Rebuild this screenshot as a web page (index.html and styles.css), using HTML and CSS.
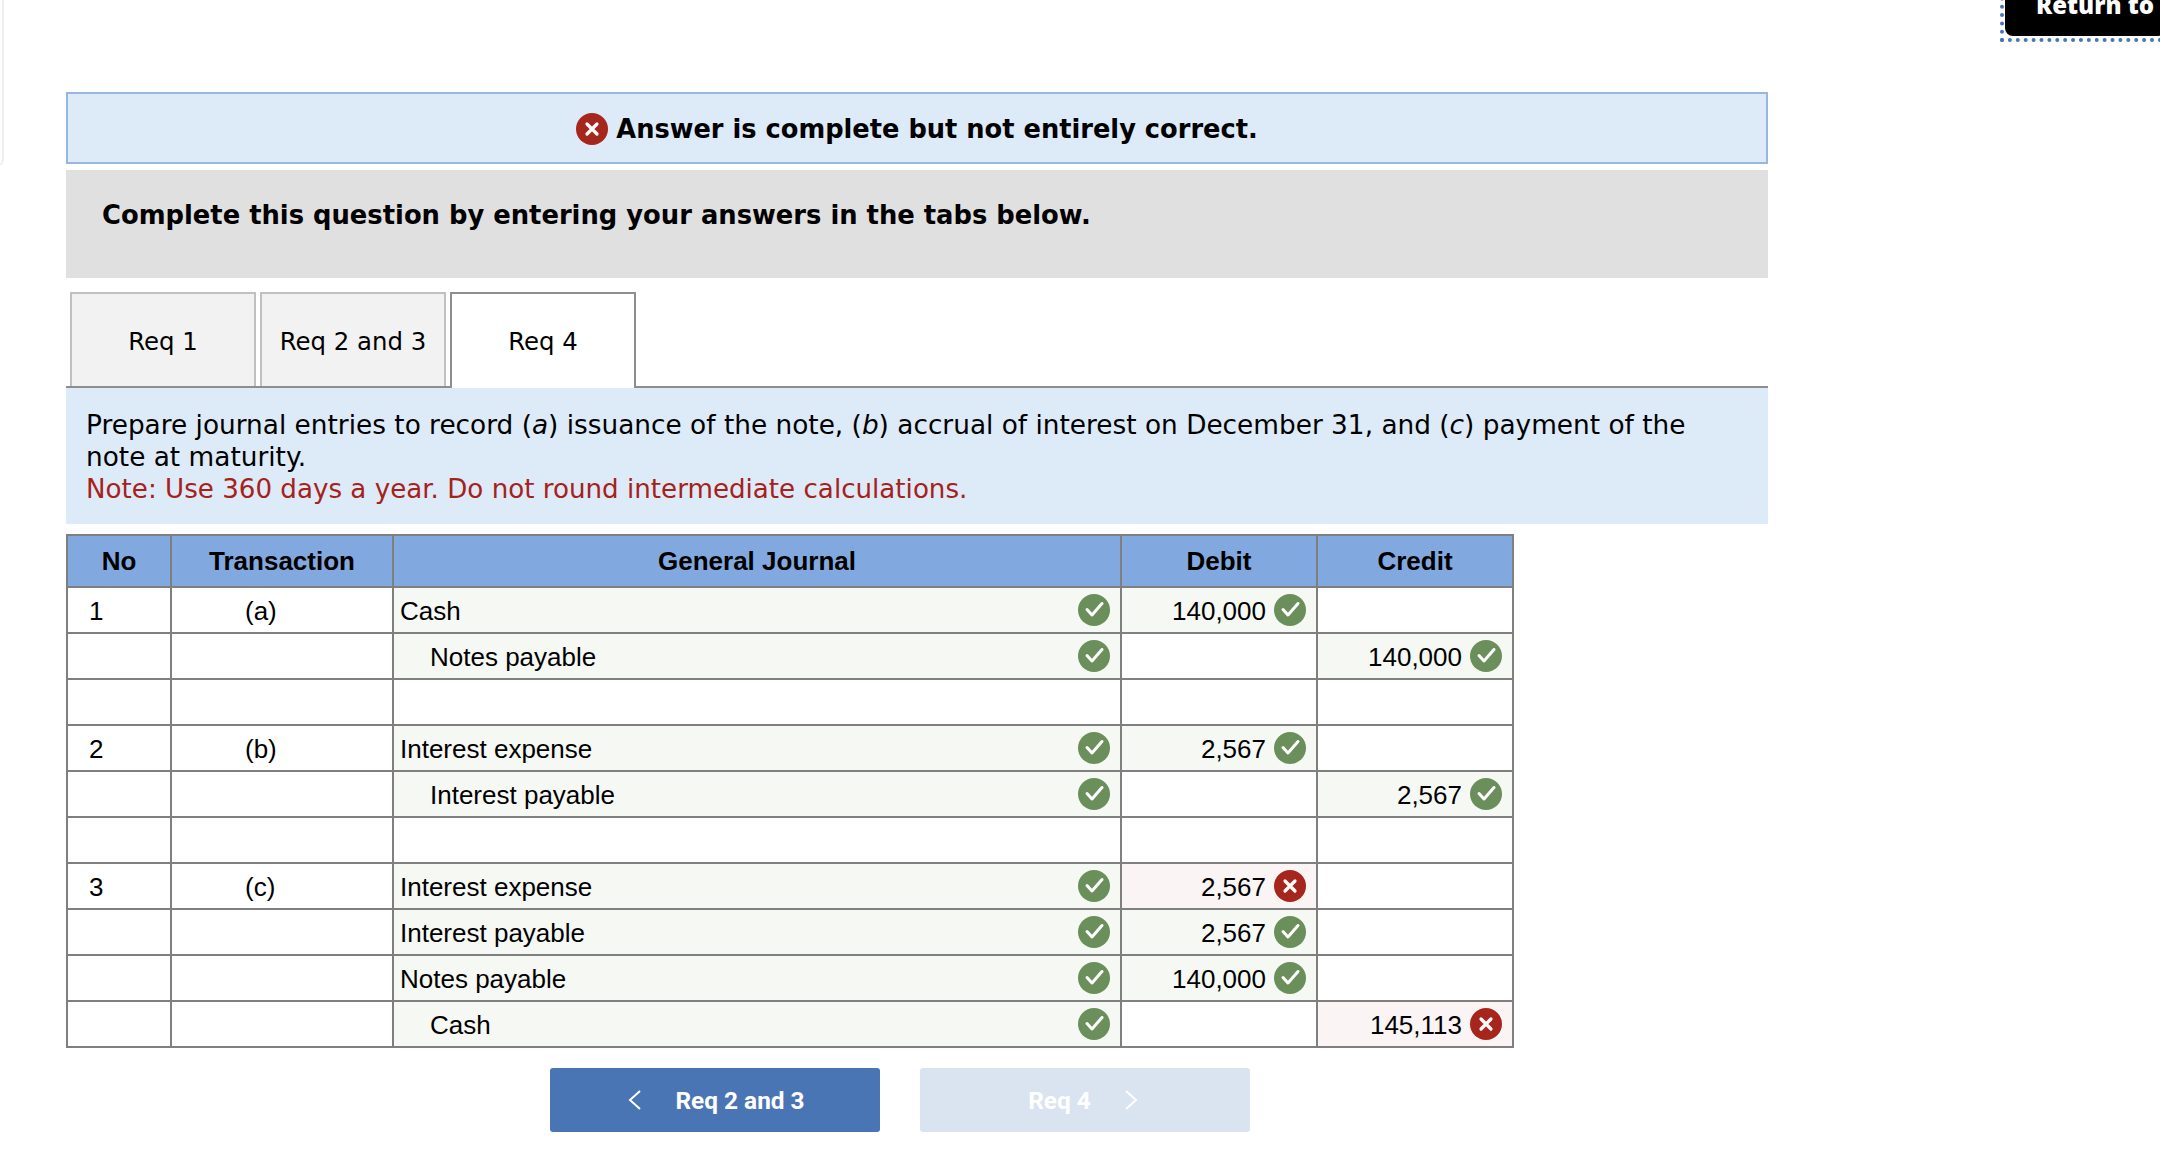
FILE: index.html
```html
<!DOCTYPE html>
<html lang="en">
<head>
  <meta charset="UTF-8">
  <title>Req 4</title>
  <link rel="stylesheet" href="styles.css">
</head>
<body>
  <svg class="sprites" width="0" height="0">
    <symbol id="ok" viewBox="0 0 32 32">
      <circle cx="16" cy="16" r="16" fill="#6a8f5b"/>
      <path d="M9 15.5l5 5.5L24 9.5" fill="none" stroke="#fff" stroke-width="3" stroke-linecap="round" stroke-linejoin="round"/>
    </symbol>
    <symbol id="bad" viewBox="0 0 32 32">
      <circle cx="16" cy="16" r="16" fill="#a6261d"/>
      <path d="M11 11l10 10M21 11L11 21" fill="none" stroke="#fff" stroke-width="3.2" stroke-linecap="round"/>
    </symbol>
  </svg>

  <div class="side-edge"></div>
  <div class="return-wrap"><a class="return-btn">Return to</a></div>

  <div class="main">
    <div class="result-banner">
      <svg class="icon"><use href="#bad"/></svg>
      <span>Answer is complete but not entirely correct.</span>
    </div>
    <div class="instructions">Complete this question by entering your answers in the tabs below.</div>

    <div class="tabs">
      <div class="tab">Req 1</div>
      <div class="tab">Req 2 and 3</div>
      <div class="tab active">Req 4</div>
    </div>

    <div class="prompt">
      Prepare journal entries to record (<i>a</i>) issuance of the note, (<i>b</i>) accrual of interest on December 31, and (<i>c</i>) payment of the note at maturity.<br>
      <span class="note">Note: Use 360 days a year. Do not round intermediate calculations.</span>
    </div>

    <table class="journal">
      <colgroup>
        <col class="col-no"><col class="col-tr"><col class="col-gj"><col class="col-amt"><col class="col-amt">
      </colgroup>
      <thead>
        <tr><th>No</th><th>Transaction</th><th>General Journal</th><th>Debit</th><th>Credit</th></tr>
      </thead>
      <tbody>
        <tr>
          <td class="no">1</td><td class="tr">(a)</td>
          <td class="good"><div class="acct">Cash<svg class="icon"><use href="#ok"/></svg></div></td>
          <td class="good"><div class="amt">140,000<svg class="icon"><use href="#ok"/></svg></div></td>
          <td></td>
        </tr>
        <tr>
          <td></td><td></td>
          <td class="good"><div class="acct indent">Notes payable<svg class="icon"><use href="#ok"/></svg></div></td>
          <td></td>
          <td class="good"><div class="amt">140,000<svg class="icon"><use href="#ok"/></svg></div></td>
        </tr>
        <tr><td></td><td></td><td></td><td></td><td></td></tr>
        <tr>
          <td class="no">2</td><td class="tr">(b)</td>
          <td class="good"><div class="acct">Interest expense<svg class="icon"><use href="#ok"/></svg></div></td>
          <td class="good"><div class="amt">2,567<svg class="icon"><use href="#ok"/></svg></div></td>
          <td></td>
        </tr>
        <tr>
          <td></td><td></td>
          <td class="good"><div class="acct indent">Interest payable<svg class="icon"><use href="#ok"/></svg></div></td>
          <td></td>
          <td class="good"><div class="amt">2,567<svg class="icon"><use href="#ok"/></svg></div></td>
        </tr>
        <tr><td></td><td></td><td></td><td></td><td></td></tr>
        <tr>
          <td class="no">3</td><td class="tr">(c)</td>
          <td class="good"><div class="acct">Interest expense<svg class="icon"><use href="#ok"/></svg></div></td>
          <td class="wrong"><div class="amt">2,567<svg class="icon"><use href="#bad"/></svg></div></td>
          <td></td>
        </tr>
        <tr>
          <td></td><td></td>
          <td class="good"><div class="acct">Interest payable<svg class="icon"><use href="#ok"/></svg></div></td>
          <td class="good"><div class="amt">2,567<svg class="icon"><use href="#ok"/></svg></div></td>
          <td></td>
        </tr>
        <tr>
          <td></td><td></td>
          <td class="good"><div class="acct">Notes payable<svg class="icon"><use href="#ok"/></svg></div></td>
          <td class="good"><div class="amt">140,000<svg class="icon"><use href="#ok"/></svg></div></td>
          <td></td>
        </tr>
        <tr>
          <td></td><td></td>
          <td class="good"><div class="acct indent">Cash<svg class="icon"><use href="#ok"/></svg></div></td>
          <td></td>
          <td class="wrong"><div class="amt">145,113<svg class="icon"><use href="#bad"/></svg></div></td>
        </tr>
      </tbody>
    </table>

    <div class="nav-btns">
      <div class="nav-btn prev">
        <svg class="chev" viewBox="0 0 13 20"><path d="M12 1L2 10l10 9" fill="none" stroke="#fff" stroke-width="2"/></svg>
        <span>Req 2 and 3</span>
      </div>
      <div class="nav-btn next disabled">
        <span>Req 4</span>
        <svg class="chev" viewBox="0 0 13 20"><path d="M1 1l10 9L1 19" fill="none" stroke="#fff" stroke-width="2"/></svg>
      </div>
    </div>
  </div>
</body>
</html>
```

FILE: styles.css
```css
body {
  margin: 0;
  background: #fff;
  color: #000;
  font-family: "DejaVu Sans", Verdana, sans-serif;
  height: 1172px;
  overflow: hidden;
}

.sprites {
  position: absolute;
}

.icon {
  width: 32px;
  height: 32px;
  flex: none;
}

.side-edge {
  position: absolute;
  left: -10px;
  top: -10px;
  width: 10px;
  height: 172px;
  border: 2px solid #eee;
  border-radius: 6px;
}

.return-wrap {
  position: absolute;
  left: 2000px;
  top: -20px;
  right: -10px;
  height: 62px;
  border: 4px dotted #4a75b5;
  padding: 0 0 2px 1px;
  box-sizing: border-box;
}

.return-btn {
  display: block;
  height: 52px;
  background: #000;
  color: #fff;
  border-radius: 8px;
  box-sizing: border-box;
  padding: 7px 0 0 31px;
  font-family: "Open Sans", sans-serif;
  font-weight: 800;
  font-size: 24px;
  line-height: 28px;
  white-space: nowrap;
}

.main {
  width: 1702px;
  margin-left: 66px;
  padding-top: 92px;
}

.result-banner {
  display: flex;
  align-items: center;
  justify-content: center;
  gap: 8px;
  height: 72px;
  box-sizing: border-box;
  background: #ddeaf8;
  border: 2px solid #98b7de;
  padding-top: 2px;
  font-weight: 700;
  font-size: 25.7px;
}

.instructions {
  margin-top: 6px;
  height: 108px;
  box-sizing: border-box;
  background: #e0e0e0;
  padding: 29px 36px 0;
  font-weight: 700;
  font-size: 25.8px;
  line-height: 32px;
}

.tabs {
  display: flex;
  gap: 4px;
  margin-top: 14px;
  padding-left: 4px;
  border-bottom: 2px solid #8e8e8e;
}

.tab {
  width: 186px;
  height: 94px;
  box-sizing: border-box;
  border: 2px solid #c0c0c0;
  border-bottom: 0;
  background: #f2f2f2;
  text-align: center;
  line-height: 95px;
  font-size: 24.4px;
}

.tab.active {
  height: 96px;
  margin-bottom: -2px;
  border-color: #8e8e8e;
  background: #fff;
}

.prompt {
  height: 136px;
  box-sizing: border-box;
  background: #ddeaf8;
  padding: 21px 20px 0;
  font-size: 26.35px;
  line-height: 32px;
}

.note {
  color: #a6211a;
  font-size: 26.15px;
}

.journal {
  margin-top: 10px;
  width: 1446px;
  table-layout: fixed;
  border-collapse: collapse;
  font-family: "Liberation Sans", Arial, sans-serif;
  font-size: 26px;
}

.col-no { width: 104px; }
.col-tr { width: 222px; }
.col-gj { width: 728px; }
.col-amt { width: 196px; }

.journal th,
.journal td {
  border: 2px solid #7f7f7f;
  padding: 0;
  height: 46px;
  box-sizing: border-box;
}

.journal th {
  height: 52px;
  background: #82a9df;
  font-weight: 700;
}

.journal td.no {
  padding: 2px 0 0 21px;
}

.journal td.tr {
  padding: 2px 0 0 73px;
}

.journal td.good {
  background: #f6f8f4;
}

.journal td.wrong {
  background: #faf4f4;
}

.acct,
.amt {
  display: flex;
  align-items: center;
  padding: 2px 10px 0 0;
}

.acct .icon,
.amt .icon {
  margin-bottom: 2px;
}

.acct {
  justify-content: space-between;
  padding-left: 6px;
}

.acct.indent {
  padding-left: 36px;
}

.amt {
  justify-content: flex-end;
  gap: 8px;
}

.nav-btns {
  display: flex;
  gap: 40px;
  margin: 20px 0 0 484px;
}

.nav-btn {
  display: flex;
  align-items: center;
  justify-content: center;
  gap: 34px;
  width: 330px;
  height: 64px;
  box-sizing: border-box;
  background: #4a75b5;
  border-radius: 3px;
  color: #fff;
  font-family: Roboto, sans-serif;
  font-weight: 700;
  font-size: 24.4px;
}

.nav-btn.prev {
  padding-left: 3px;
}

.nav-btn.next {
  padding-right: 4px;
}

.nav-btn.disabled {
  background: #dae4f0;
}

.chev {
  width: 13px;
  height: 20px;
}
```
